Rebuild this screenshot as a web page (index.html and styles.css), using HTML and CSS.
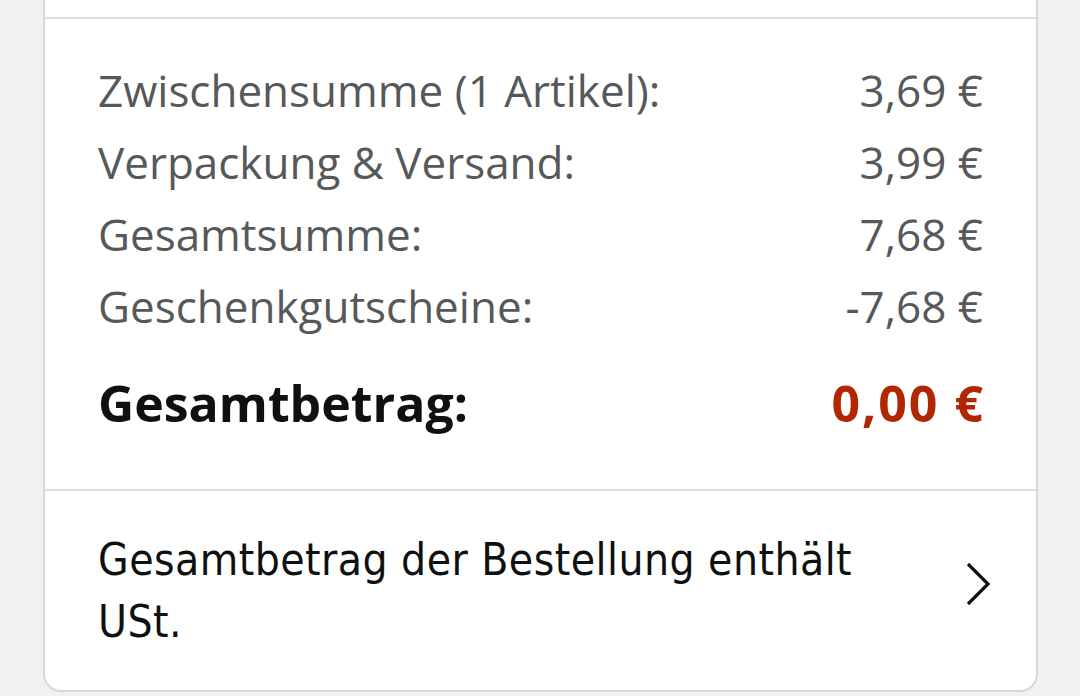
FILE: index.html
```html
<!DOCTYPE html>
<html lang="de">
<head>
<meta charset="utf-8">
<link rel="stylesheet" href="styles.css">
</head>
<body>
<div class="card">
  <div class="top-end"></div>
  <div class="summary">
    <div class="row"><span>Zwischensumme (1 Artikel):</span><span>3,69 €</span></div>
    <div class="row"><span>Verpackung &amp; Versand:</span><span>3,99 €</span></div>
    <div class="row"><span>Gesamtsumme:</span><span>7,68 €</span></div>
    <div class="row"><span>Geschenkgutscheine:</span><span>-7,68 €</span></div>
    <div class="row total"><span>Gesamtbetrag:</span><span class="price">0,00 €</span></div>
  </div>
  <div class="tax">
    <div class="tax-text">Gesamtbetrag der Bestellung enthält USt.</div>
    <svg class="chev" width="26" height="44" viewBox="0 0 26 44"><path d="M3 2 L23 22 L3 42" fill="none" stroke="#0f1111" stroke-width="3.2"/></svg>
  </div>
</div>
</body>
</html>
```
FILE: styles.css
```css
html, body { margin: 0; padding: 0; }
body {
  background: #f1f1f1;
  width: 1080px;
  height: 696px;
  overflow: hidden;
  font-family: "Open Sans", "Noto Sans", sans-serif;
}
.card {
  margin-left: 43px;
  width: 991px;
  background: #fff;
  border: 2px solid #d5d9d9;
  border-top: none;
  border-radius: 0 0 18px 18px;
}
.top-end {
  height: 17px;
  border-bottom: 2px solid #dcdfdf;
}
.summary {
  padding: 35px 53px 50px 53px;
  border-bottom: 2px solid #dcdfdf;
}
.row {
  display: flex;
  justify-content: space-between;
  height: 72px;
  line-height: 72px;
  font-size: 44px;
  color: #565959;
}
.row.total {
  margin-top: 25px;
  font-weight: 700;
  color: #0f1111;
  font-size: 50px;
}
.row .price {
  color: #b12704;
  letter-spacing: 2px;
  margin-right: -2px;
}
.tax {
  display: flex;
  align-items: center;
  padding: 38px 45px 37px 53px;
}
.tax-text {
  flex: 1;
  padding-right: 100px;
  font-family: "DejaVu Sans Condensed", "Noto Sans", sans-serif;
  font-size: 44px;
  letter-spacing: 0.45px;
  line-height: 62px;
  color: #0f1111;
}
.chev { display: block; margin-bottom: 14px; }
```
